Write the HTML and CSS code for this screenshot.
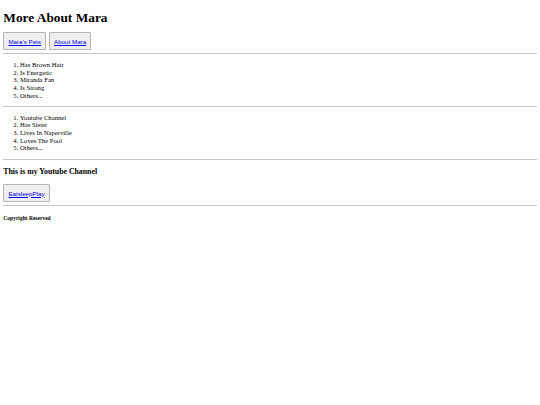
FILE: index.html
```html
<!DOCTYPE html>
<html>
<head>
<meta charset="utf-8">
<title>More About Mara</title>
<link rel="stylesheet" href="styles.css">
</head>
<body>
<h1 class="title">More About Mara</h1>
<div class="nav">
  <button class="btn"><a href="#">Mara's Pets</a></button>
  <button class="btn"><a href="#">About Mara</a></button>
</div>
<hr class="rule">
<ol class="list">
  <li>Has Brown Hair</li>
  <li>Is Energetic</li>
  <li>Miranda Fan</li>
  <li>Is Strong</li>
  <li>Others...</li>
</ol>
<hr class="rule">
<ol class="list">
  <li>Youtube Channel</li>
  <li>Has Sister</li>
  <li>Lives In Naperville</li>
  <li>Loves The Pool</li>
  <li>Others...</li>
</ol>
<hr class="rule">
<h3 class="subtitle">This is my Youtube Channel</h3>
<div class="nav">
  <button class="btn"><a href="#">EatsleepPlay</a></button>
</div>
<hr class="rule">
<h5 class="footer">Copyright Reserved</h5>
</body>
</html>
```
FILE: styles.css
```css
html, body {
  background: #ffffff;
}
body {
  margin: 3.33px;
  font-family: "Liberation Serif", "Times New Roman", serif;
  font-size: 6.67px;
  color: #000;
}
.title {
  font-size: 13.33px;
  font-weight: bold;
  margin: 6.8px 0 6.9px;
  line-height: 1.15;
}
.nav {
  display: flex;
  gap: 3px;
}
.btn {
  font-family: "Liberation Sans", Arial, sans-serif;
  font-size: 6.2px;
  line-height: 1.15;
  padding: 4.3px 4.1px;
  margin: 0;
  background: #efefef;
  border: 1px solid #b4b4b4;
  border-radius: 1px;
}
.btn a {
  color: #0000ee;
  text-decoration: underline;
}
.rule {
  margin: 3.33px 0;
  height: 0;
  border: none;
  border-top: 1px solid #c6c6c6;
}
.list {
  margin: 6.67px 0;
  padding-left: 16.67px;
  line-height: 1.15;
}
.subtitle {
  font-size: 7.8px;
  margin: 7.8px 0;
  line-height: 1.15;
}
.footer {
  font-size: 5.53px;
  margin: 8.6px 0;
  line-height: 1.15;
}
```
